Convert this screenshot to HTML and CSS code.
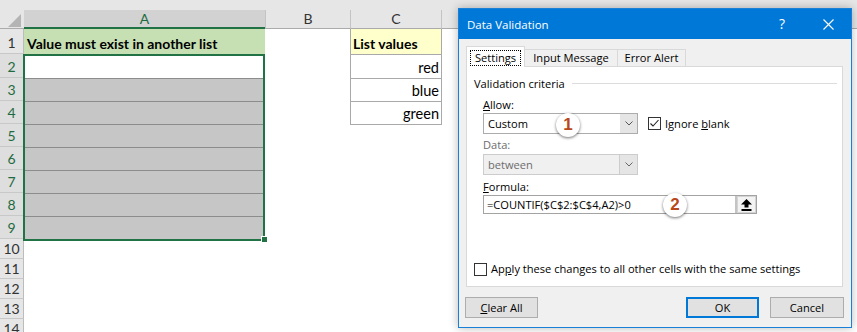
FILE: index.html
```html
<!DOCTYPE html>
<html>
<head>
<meta charset="utf-8">
<link rel="stylesheet" href="styles.css">
</head>
<body>
<div class="sheet">
  <div class="band"></div>
  <div class="colheads">
    <div class="corner"><svg width="24" height="19" viewBox="0 0 24 19"><polygon points="21,4 21,17 8,17" fill="#b4b4b4"/></svg></div>
    <div class="ch ch-a">A</div>
    <div class="ch ch-b">B</div>
    <div class="ch ch-c">C</div>
    <div class="ch ch-rest"></div>
  </div>
  <div class="sbody">
    <div class="rowheads">
      <div class="rh rh-1">1</div>
      <div class="rh rh-2 rh-sel">2</div>
      <div class="rh rh-sel">3</div>
      <div class="rh rh-sel">4</div>
      <div class="rh rh-sel">5</div>
      <div class="rh rh-sel">6</div>
      <div class="rh rh-sel">7</div>
      <div class="rh rh-sel">8</div>
      <div class="rh rh-sel">9</div>
      <div class="rh rh-short">10</div>
      <div class="rh rh-short">11</div>
      <div class="rh rh-short">12</div>
      <div class="rh rh-short">13</div>
      <div class="rh rh-short">14</div>
    </div>
    <div class="col col-a">
      <div class="cell a1">Value must exist in another list</div>
      <div class="selection">
        <div class="srow srow-active"></div>
        <div class="srow"></div>
        <div class="srow"></div>
        <div class="srow"></div>
        <div class="srow"></div>
        <div class="srow"></div>
        <div class="srow"></div>
        <div class="srow"></div>
        <span class="fill-handle"></span>
      </div>
    </div>
    <div class="col col-b"></div>
    <div class="col col-c">
      <div class="cell c1">List values</div>
      <div class="cell cv cv-2">red</div>
      <div class="cell cv">blue</div>
      <div class="cell cv">green</div>
    </div>
  </div>
</div>

<div class="dialog">
  <div class="titlebar">
    <div class="title">Data Validation</div>
    <div class="tbtn help">?</div>
    <div class="tbtn close"><svg width="11" height="11" viewBox="0 0 11 11"><path d="M0.5 0.5 L10.5 10.5 M10.5 0.5 L0.5 10.5" stroke="#fff" stroke-width="1.1" fill="none"/></svg></div>
  </div>
  <div class="dbody">
    <div class="tabs">
      <div class="tab tab-active"><span class="focus">Settings</span></div>
      <div class="tab tab-input">Input Message</div>
      <div class="tab tab-error">Error Alert</div>
    </div>
    <div class="panel">
      <div class="group"><span>Validation criteria</span><span class="group-line"></span></div>
      <div class="field">
        <div class="lbl lbl-allow"><u>A</u>llow:</div>
        <div class="row-allow">
          <div class="combo"><span class="combo-text">Custom</span><span class="combo-btn"><svg width="8" height="5" viewBox="0 0 8 5"><path d="M0.5 0.5 L4 4 L7.5 0.5" stroke="#555" fill="none"/></svg></span></div>
          <span class="checkbox checked"><svg width="11" height="11" viewBox="0 0 11 11"><path d="M1.5 5.5 L4 8 L9.5 2" stroke="#222" stroke-width="1.1" fill="none"/></svg></span>
          <span class="cblabel">Ignore <u>b</u>lank</span>
        </div>
        <div class="lbl lbl-data">Data:</div>
        <div class="combo combo-dis"><span class="combo-text">between</span><span class="combo-btn"><svg width="8" height="5" viewBox="0 0 8 5"><path d="M0.5 0.5 L4 4 L7.5 0.5" stroke="#666" fill="none"/></svg></span></div>
        <div class="lbl lbl-formula"><u>F</u>ormula:</div>
        <div class="finput"><span class="ftext">=COUNTIF($C$2:$C$4,A2)&gt;0</span><span class="fbtn"><svg width="11" height="12" viewBox="0 0 11 12"><polygon points="5.5,0 0,5.5 3.5,5.5 3.5,8.5 7.5,8.5 7.5,5.5 11,5.5" fill="#000"/><rect x="0.5" y="10" width="10" height="2" fill="#000"/></svg></span></div>
      </div>
      <div class="apply"><span class="checkbox"></span><span class="cblabel">Ap<u>p</u>ly these changes to all other cells with the same settings</span></div>
    </div>
    <div class="footer">
      <div class="btn btn-clear"><u>C</u>lear All</div>
      <div class="spacer"></div>
      <div class="btn btn-ok">OK</div>
      <div class="btn btn-cancel">Cancel</div>
    </div>
  </div>
  <div class="badge badge-1">1</div>
  <div class="badge badge-2">2</div>
</div>
</body>
</html>
```
FILE: styles.css
```css
html, body {
  margin: 0;
  padding: 0;
}
body {
  width: 857px;
  height: 332px;
  overflow: hidden;
  background: #fff;
  position: relative;
  font-family: Lato, "Liberation Sans", sans-serif;
}

/* ---------- sheet ---------- */
.sheet {
  display: flex;
  flex-direction: column;
}
.band {
  height: 10px;
  background: #e6e6e6;
}
.colheads {
  display: flex;
  height: 19px;
  background: #e6e6e6;
}
.corner {
  width: 24px;
  height: 19px;
  box-sizing: border-box;
  border-bottom: 1px solid #ababab;
}
.corner svg { display: block; }
.ch {
  box-sizing: border-box;
  height: 19px;
  border-bottom: 1px solid #ababab;
  text-align: center;
  font-size: 14px;
  line-height: 18px;
  color: #333;
}
.ch-a {
  width: 241px;
  background: #d2d2d2;
  color: #1e6b41;
  border-bottom: 2px solid #217346;
}
.ch-b {
  width: 85px;
  border-left: 1px solid #c4c4c4;
}
.ch-c {
  width: 92px;
  border-left: 1px solid #c4c4c4;
  border-right: 1px solid #c4c4c4;
}
.ch-rest { flex: 1; }

.sbody {
  display: flex;
  align-items: flex-start;
}
.rowheads {
  width: 24px;
  display: flex;
  flex-direction: column;
}
.rh {
  box-sizing: border-box;
  height: 23px;
  background: #e6e6e6;
  border-bottom: 1px solid #c8c8c8;
  border-right: 1px solid #bcbcbc;
  display: flex;
  align-items: flex-end;
  justify-content: center;
  font-size: 14px;
  line-height: 16px;
  padding-bottom: 2px;
  color: #333;
}
.rh-1 { height: 25px; }
.rh-2 { height: 24px; }
.rh-sel {
  background: #dedede;
  color: #1e6b41;
}
.rh-short { height: 20px; padding-bottom: 1px; }

.col {
  display: flex;
  flex-direction: column;
}
.col-a { width: 241px; }
.col-b { width: 85px; }
.col-c { width: 92px; }

.cell {
  box-sizing: border-box;
  font-size: 14.5px;
  line-height: 16px;
  display: flex;
  align-items: flex-end;
  padding-bottom: 2px;
  color: #000;
}
.a1 {
  height: 25px;
  background: #c6e0b4;
  font-weight: bold;
  font-size: 14px;
  padding-left: 3px;
}
.selection {
  position: relative;
  box-sizing: border-box;
  margin-left: -1px;
  width: 242px;
  height: 187px;
  border: 2px solid #217346;
  background: #fff;
}
.srow {
  box-sizing: border-box;
  height: 23px;
  background: #c6c6c6;
  border-top: 1px solid #8c8c8c;
}
.srow-active {
  height: 22px;
  background: #fff;
  border-top: none;
}
.fill-handle {
  position: absolute;
  right: -4px;
  bottom: -3px;
  width: 5px;
  height: 5px;
  background: #217346;
  border-left: 1px solid #fff;
  border-top: 1px solid #fff;
}

.c1, .cv {
  border-left: 1px solid #a9a9a9;
  border-right: 1px solid #a9a9a9;
  border-bottom: 1px solid #a9a9a9;
}
.c1 {
  height: 26px;
  background: #ffffcc;
  font-weight: bold;
  font-size: 14px;
  padding-left: 2px;
}
.cv {
  height: 23px;
  justify-content: flex-end;
  padding-right: 2px;
}
.cv-2 { height: 24px; }

/* ---------- dialog ---------- */
.dialog {
  position: absolute;
  left: 458px;
  top: 8px;
  width: 394px;
  height: 320px;
  box-sizing: border-box;
  border: 1px solid #1a7fd6;
  background: #f0f0f0;
  box-shadow: 0 0 9px rgba(0, 0, 0, 0.28);
  display: flex;
  flex-direction: column;
  font-family: "Open Sans", "Noto Sans", sans-serif;
  font-size: 11.1px;
  color: #000;
}
.titlebar {
  height: 30px;
  flex: 0 0 30px;
  background: #0078d7;
  color: #fff;
  display: flex;
  align-items: center;
}
.title {
  flex: 1;
  padding-left: 8px;
  font-size: 11.5px;
}
.tbtn {
  width: 46px;
  height: 30px;
  display: flex;
  align-items: center;
  justify-content: center;
}
.help {
  font-size: 14px;
  line-height: 14px;
}
.close svg { display: block; }

.dbody {
  flex: 1;
  display: flex;
  flex-direction: column;
  padding: 7px 8px 0 7px;
}
.tabs {
  display: flex;
  align-items: flex-end;
  height: 21px;
  margin-bottom: -1px;
  position: relative;
  z-index: 1;
}
.tab {
  box-sizing: border-box;
  height: 17px;
  margin-bottom: 1px;
  border: 1px solid #d9d9d9;
  border-bottom: none;
  display: flex;
  align-items: center;
  justify-content: center;
  background: #f0f0f0;
  line-height: 14px;
}
.tab-active {
  width: 59px;
  height: 21px;
  margin-bottom: 0;
  background: #fff;
  align-items: flex-start;
  padding-top: 3px;
}
.focus {
  border: 1px dotted #000;
  padding: 0 4px;
  line-height: 14px;
}
.tab-input {
  width: 93px;
  border-left: none;
}
.tab-error {
  width: 68px;
  border-left: none;
}

.panel {
  box-sizing: border-box;
  height: 221px;
  flex: 0 0 221px;
  background: #fff;
  border: 1px solid #d9d9d9;
  display: flex;
  flex-direction: column;
  padding-bottom: 9px;
}
.group {
  display: flex;
  align-items: center;
  height: 16px;
  margin-top: 8px;
  padding: 0 5px 0 7px;
}
.group-line {
  flex: 1;
  height: 1px;
  background: #dcdcdc;
  margin-left: 7px;
}
.field {
  padding-left: 16px;
  display: flex;
  flex-direction: column;
  align-items: flex-start;
}
.lbl { line-height: 16px; }
.lbl-allow { margin-top: 6px; }
.lbl-data { margin-top: 3px; color: #6d6d6d; }
.lbl-formula { margin-top: 4px; }
.row-allow {
  display: flex;
  align-items: center;
  height: 21px;
}
.combo {
  box-sizing: border-box;
  width: 155px;
  height: 21px;
  border: 1px solid #acacac;
  background: #fff;
  display: flex;
}
.combo-text {
  flex: 1;
  padding-left: 4px;
  line-height: 19px;
}
.combo-btn {
  width: 17px;
  background: #e5e5e5;
  display: flex;
  align-items: center;
  justify-content: center;
}
.combo-dis {
  margin-top: 1px;
  background: #f0f0f0;
  border-color: #cccccc;
  color: #6d6d6d;
}
.combo-dis .combo-btn {
  background: #e5e5e5;
  border-left: 1px solid #cccccc;
}
.checkbox {
  box-sizing: border-box;
  width: 13px;
  height: 13px;
  border: 1px solid #333;
  background: #fff;
  display: inline-flex;
  align-items: center;
  justify-content: center;
  flex: 0 0 13px;
}
.checkbox svg { display: block; }
.row-allow .checkbox { margin-left: 10px; }
.cblabel { margin-left: 4px; line-height: 16px; }

.finput {
  box-sizing: border-box;
  width: 274px;
  height: 19px;
  border: 1px solid #a3a3a3;
  background: #fff;
  display: flex;
}
.ftext {
  flex: 1;
  padding-left: 3px;
  line-height: 17px;
}
.fbtn {
  box-sizing: border-box;
  width: 21px;
  background: #f3f3f3;
  border-left: 2px solid #c4c4c4;
  box-shadow: inset 0 0 0 1px #d4d4d4;
  display: flex;
  align-items: center;
  justify-content: center;
}
.fbtn svg { display: block; }

.apply {
  margin-top: auto;
  padding-left: 7px;
  display: flex;
  align-items: center;
  height: 16px;
}

.footer {
  display: flex;
  margin-top: 10px;
  height: 21px;
}
.spacer { flex: 1; }
.btn {
  box-sizing: border-box;
  height: 21px;
  background: #e1e1e1;
  border: 1px solid #adadad;
  display: flex;
  align-items: center;
  justify-content: center;
  line-height: 14px;
}
.btn-clear { width: 73px; margin-left: -1px; }
.btn-ok {
  width: 73px;
  border: 2px solid #0078d7;
}
.btn-cancel {
  width: 74px;
  margin-left: 11px;
  margin-right: -1px;
}

.badge {
  position: absolute;
  width: 24px;
  height: 24px;
  border-radius: 50%;
  background: #fff;
  box-shadow: 0 1px 3px rgba(0, 0, 0, 0.55);
  color: #b8481a;
  font-family: "Liberation Sans", Arial, sans-serif;
  font-weight: bold;
  font-size: 17px;
  line-height: 24px;
  text-align: center;
}
.badge-1 { left: 97px; top: 104px; }
.badge-2 { left: 204px; top: 184px; }
```
